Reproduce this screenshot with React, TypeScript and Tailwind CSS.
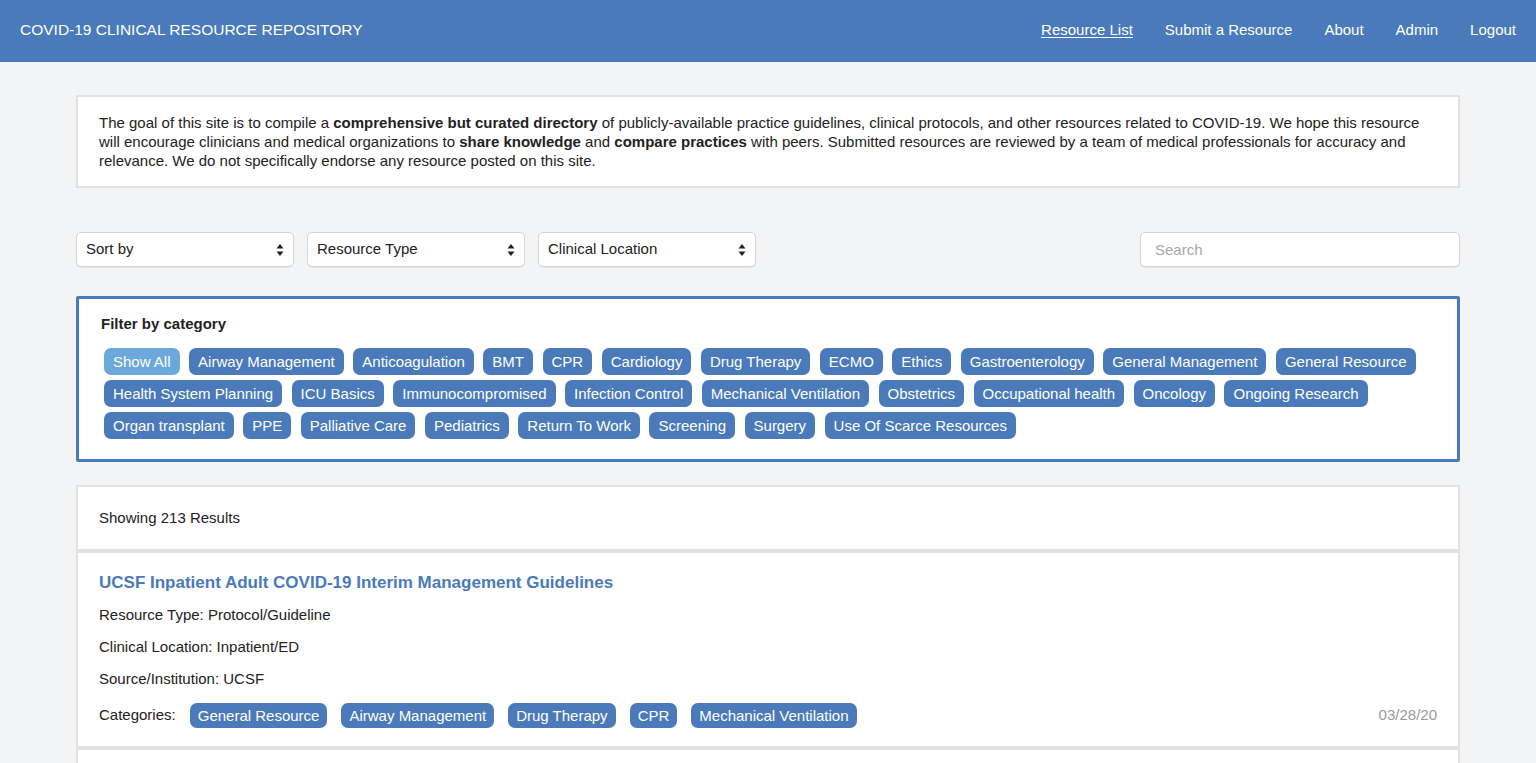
import React from 'react';

const categories = [
  'Airway Management', 'Anticoagulation', 'BMT', 'CPR', 'Cardiology', 'Drug Therapy', 'ECMO', 'Ethics',
  'Gastroenterology', 'General Management', 'General Resource', 'Health System Planning', 'ICU Basics',
  'Immunocompromised', 'Infection Control', 'Mechanical Ventilation', 'Obstetrics', 'Occupational health',
  'Oncology', 'Ongoing Research', 'Organ transplant', 'PPE', 'Palliative Care', 'Pediatrics',
  'Return To Work', 'Screening', 'Surgery', 'Use Of Scarce Resources',
];

function SelectArrows() {
  return (
    <svg width="8" height="14" viewBox="0 0 8 14" className="shrink-0">
      <path d="M4 1 L7.5 5.5 H0.5 Z" fill="#222" />
      <path d="M4 13 L7.5 8.5 H0.5 Z" fill="#222" />
    </svg>
  );
}

function FakeSelect({ label }: { label: string }) {
  return (
    <div className="w-[218px] h-[35px] bg-white border border-[#d6d6d6] rounded-[5px] shadow-[0_1px_1px_rgba(0,0,0,0.06)] flex items-center justify-between pl-[9px] pr-[9px] text-[15px] text-[#222]">
      <span>{label}</span>
      <SelectArrows />
    </div>
  );
}

function Tag({ children, light }: { children: React.ReactNode; light?: boolean }) {
  return (
    <span className={`h-[27px] px-[9px] rounded-[7px] text-[15px] leading-[27px] text-white whitespace-nowrap ${light ? 'bg-[#6ba8dc]' : 'bg-[#4a7aba]'}`}>
      {children}
    </span>
  );
}

export default function App() {
  return (
    <div className="min-h-screen bg-[#f3f4f6] font-['Liberation_Sans',Arial,sans-serif] text-[#222]">
      {/* Navbar */}
      <nav className="h-[62px] bg-[#4a7aba] flex items-center justify-between px-5 pb-[2px] text-white">
        <span className="text-[15.5px]">COVID-19 CLINICAL RESOURCE REPOSITORY</span>
        <div className="flex items-center gap-8 text-[15px]">
          <a className="underline underline-offset-2">Resource List</a>
          <a>Submit a Resource</a>
          <a>About</a>
          <a>Admin</a>
          <a>Logout</a>
        </div>
      </nav>

      <main className="mx-[76px] pt-[33px]">
        {/* Intro */}
        <div className="bg-white border-2 border-[#e2e2e2] px-[21px] py-[16px] text-[15px] leading-[19px]">
          The goal of this site is to compile a <b>comprehensive but curated directory</b> of publicly-available practice guidelines, clinical protocols, and other resources related to COVID-19. We hope this resource will encourage clinicians and medical organizations to <b>share knowledge</b> and <b>compare practices</b> with peers. Submitted resources are reviewed by a team of medical professionals for accuracy and relevance. We do not specifically endorse any resource posted on this site.
        </div>

        {/* Controls */}
        <div className="mt-[44px] flex items-center justify-between">
          <div className="flex gap-[13px]">
            <FakeSelect label="Sort by" />
            <FakeSelect label="Resource Type" />
            <FakeSelect label="Clinical Location" />
          </div>
          <input
            placeholder="Search"
            className="w-[320px] h-[35px] bg-white border border-[#d6d6d6] rounded-[5px] shadow-[0_1px_1px_rgba(0,0,0,0.06)] px-[14px] text-[15px] placeholder-[#a8a8a8] outline-none"
          />
        </div>

        {/* Filter by category */}
        <div className="mt-[29px] bg-white border-[3px] border-[#4a7aba] rounded-[2px] pl-[22px] pr-[20px] pt-[15px] pb-[20px]">
          <h3 className="text-[15px] leading-[19px] font-bold">Filter by category</h3>
          <div className="mt-[15px] pl-[3px] flex flex-wrap gap-x-[9.5px] gap-y-[5px]">
            <Tag light>Show All</Tag>
            {categories.map((c) => (
              <Tag key={c}>{c}</Tag>
            ))}
          </div>
        </div>

        {/* Results */}
        <div className="mt-[23px]">
          <div className="h-[66px] bg-white border-2 border-[#e2e2e2] flex items-center px-[21px] text-[15px]">
            Showing 213 Results
          </div>

          <div className="bg-white border-2 border-[#e2e2e2] px-[21px] pt-[14px] pb-[18px] text-[15px]">
            <div className="h-[32px] flex items-center">
              <a className="text-[17px] font-bold text-[#4a7aba]">UCSF Inpatient Adult COVID-19 Interim Management Guidelines</a>
            </div>
            <div className="h-[32px] flex items-center">Resource Type: Protocol/Guideline</div>
            <div className="h-[32px] flex items-center">Clinical Location: Inpatient/ED</div>
            <div className="h-[32px] flex items-center">Source/Institution: UCSF</div>
            <div className="mt-[8px] flex items-center justify-between">
              <div className="flex items-center gap-[14px]">
                <span>Categories:</span>
                {['General Resource', 'Airway Management', 'Drug Therapy', 'CPR', 'Mechanical Ventilation'].map((c) => (
                  <span key={c} className="h-[25px] px-[8px] rounded-[7px] bg-[#4a7aba] text-white leading-[25px] whitespace-nowrap">
                    {c}
                  </span>
                ))}
              </div>
              <span className="text-[#9a9a9a]">03/28/20</span>
            </div>
          </div>

          <div className="bg-white border-2 border-[#e2e2e2] px-[21px] pt-[14px] pb-[18px] text-[15px]">
            <div className="h-[32px] flex items-center">
              <a className="text-[17px] font-bold text-[#4a7aba]">COVID-19 Critical Care Guidelines</a>
            </div>
            <div className="h-[32px] flex items-center">Resource Type: Protocol/Guideline</div>
          </div>
        </div>
      </main>
    </div>
  );
}
